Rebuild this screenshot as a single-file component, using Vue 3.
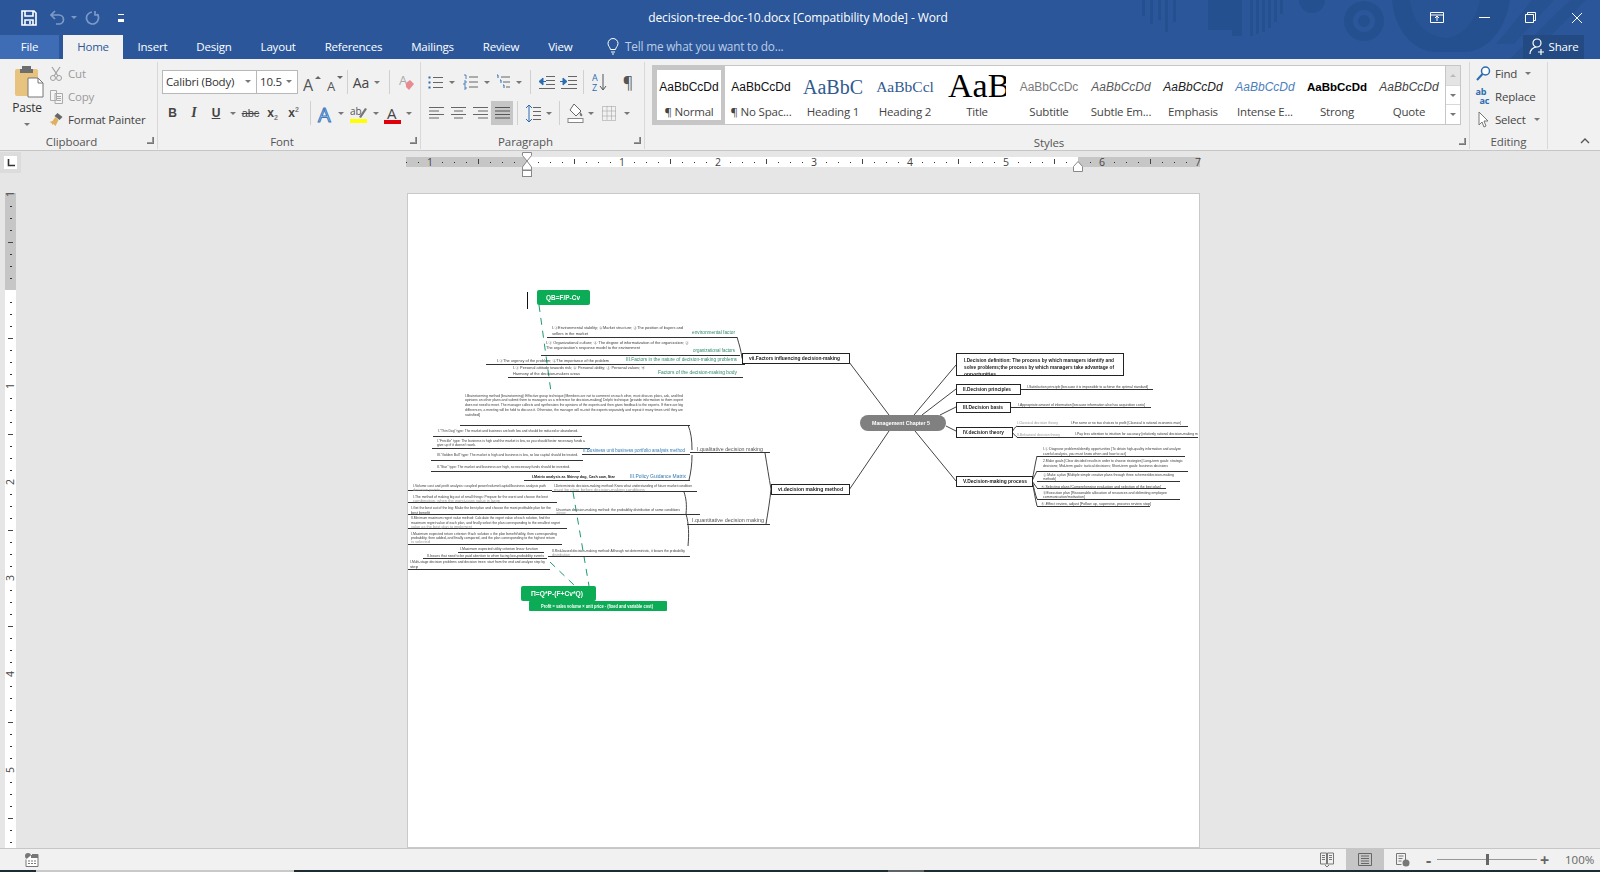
<template>
  <div class="word">
    <div class="chrome">
      <svg class="decor" width="480" height="59" viewBox="1120 0 480 59">
        <g fill="#25508f">
          <rect v-for="b in decorBars" :key="b[0]" :x="b[0]" y="0" :width="b[1]" :height="b[2]" />
          <circle cx="1312" cy="0" r="13" />
          <circle cx="1364" cy="21" r="20" />
          <path d="M1392 0h118c-4 28-22 52-46 52h-28c-24 0-42-24-44-52z" />
          <path d="M1532 0h22l-40 44h-18zM1570 0h16l-58 59h-18z" opacity="0.7" />
        </g>
        <circle cx="1364" cy="21" r="11" fill="#2b579a" />
        <circle cx="1364" cy="21" r="6" fill="#25508f" />
        <path d="M1410 0c2 20 14 36 36 38 18-2 30-18 34-38z" fill="#2b579a" opacity="0.55" />
      </svg>
      <header class="titlebar">
        <div class="qat">
          <svg width="16" height="16" viewBox="0 0 16 16"><path d="M1 1h12l2 2v12H1z M4 1v5h8V1 M4 15v-5h8v5 M9 11v3" fill="none" stroke="#fff" stroke-width="1.6" /></svg>
          <svg class="undo" width="15" height="15" viewBox="0 0 15 15"><path d="M5 1L1 5l4 4M1 5h8a4 4 0 0 1 0 9H6" fill="none" stroke="#7d9ac6" stroke-width="1.7" /></svg>
          <i class="qat-dd"></i>
          <svg class="redo" width="15" height="15" viewBox="0 0 15 15"><path d="M10 1v4h4M12 4a6 6 0 1 1-5-2" fill="none" stroke="#7d9ac6" stroke-width="1.7" /></svg>
          <span class="qat-more"></span>
        </div>
        <div class="doc-title">decision-tree-doc-10.docx [Compatibility Mode] - Word</div>
        <div class="win-ctl">
          <svg width="14" height="12" viewBox="0 0 14 12"><path d="M.5.5h13v10H.5zM.5 3h13M7 9V4.500M5 6l2-2 2 2" fill="none" stroke="#fff" /></svg>
          <svg width="11" height="11" viewBox="0 0 11 11"><path d="M0 5.500h11" stroke="#fff" /></svg>
          <svg width="11" height="11" viewBox="0 0 11 11"><path d="M.5 2.500h8v8h-8zM2.500 2.500v-2h8v8h-2" fill="none" stroke="#fff" /></svg>
          <svg width="12" height="12" viewBox="0 0 12 12"><path d="M1 1l10 10M11 1L1 11" stroke="#fff" /></svg>
        </div>
      </header>

      <nav class="tabs">
        <span class="tab file">File</span>
        <span class="tab home">Home</span>
        <span v-for="t in tabs" :key="t" class="tab">{{ t }}</span>
        <span class="tell">
          <svg width="12" height="17" viewBox="0 0 12 17"><path d="M3.500 11.500C3 9 1 8 1 5.500a5 5 0 0 1 10 0C11 8 9 9 8.500 11.500zM4 14h4M5 16h2" fill="none" stroke="#fff" /></svg>
          Tell me what you want to do...
        </span>
        <span class="share">
          <svg width="16" height="17" viewBox="0 0 16 17"><path d="M8 1a4 4 0 0 1 0 8 4 4 0 0 1 0-8zM1 16c0-4 3-7 7-7M9 14h6M12 11v6" fill="none" stroke="#fff" stroke-width="1.200" /></svg>
          Share
        </span>
      </nav>
    </div>

    <section class="ribbon">
      <div class="group clipboard">
        <div class="group-body clip-body">
          <div class="paste">
            <svg width="29" height="33" viewBox="0 0 29 33">
              <rect x="0" y="4" width="23" height="27" rx="2" fill="#e8c27f" />
              <path d="M7 4h9V1h-9z M5 4h13v4H5z" fill="#6d6d6d" />
              <path d="M13 13h10l5 5v14H13z" fill="#fff" stroke="#777" />
              <path d="M23 13v5h5" fill="none" stroke="#777" />
            </svg>
            <span>Paste</span>
            <i class="dd"></i>
          </div>
          <div class="clip-list">
            <div class="clip-row off">
              <svg width="15" height="15" viewBox="0 0 15 15"><path d="M3 1l6 9M11 1L5 10" stroke="#a0a0a0" stroke-width="1.200" fill="none" /><circle cx="4" cy="12" r="2.500" fill="none" stroke="#a0a0a0" /><circle cx="10" cy="12" r="2.500" fill="none" stroke="#a0a0a0" /></svg>
              Cut
            </div>
            <div class="clip-row off">
              <svg width="15" height="15" viewBox="0 0 15 15"><path d="M1.500 1.500h6v10h-6zM6 4.500h7.500v10H6zM8 7.500h4M8 9.500h4M8 11.500h4" fill="#f4f4f4" stroke="#aaa" /></svg>
              Copy
            </div>
            <div class="clip-row">
              <svg width="16" height="15" viewBox="0 0 16 15"><path d="M9 1l5 4-3 3-5-4z" fill="#666" /><path d="M7 5l3 3-3 6-2-2-1 1-1-2-2-1 3-1z" fill="#e0b060" /></svg>
              Format Painter
            </div>
          </div>
        </div>
        <div class="group-label">Clipboard<i class="launcher"></i></div>
      </div>

      <div class="group font">
        <div class="group-body rows">
          <div class="row font-1">
            <div class="combos">
              <span class="combo family">Calibri (Body)<i class="dd"></i></span>
              <span class="combo size">10.5<i class="dd"></i></span>
            </div>
            <svg width="18" height="24" viewBox="0 -6 18 24"><text x="0" y="15" class="ico-a">A</text><path d="M12 3l3-3 3 3z" fill="#666" /></svg>
            <svg width="16" height="24" viewBox="0 -6 16 24"><text x="0" y="15" class="ico-a small">A</text><path d="M10 0l3 3 3-3z" fill="#666" /></svg>
            <b class="sep"></b>
            <span class="aa">Aa</span><i class="dd"></i>
            <b class="sep"></b>
            <svg width="15" height="22" viewBox="0 -3 15 22"><text x="0" y="11" class="ico-erase">A</text><path d="M7 9l4-3 4 4-5 6-3-3z" fill="#e78a92" /></svg>
          </div>
          <div class="row font-2">
            <b class="fmt">B</b>
            <em class="fmt">I</em>
            <u class="fmt ub">U</u>
            <i class="dd"></i>
            <s class="fmt abc">abc</s>
            <span class="fmt">x<sub>2</sub></span>
            <span class="fmt">x<sup>2</sup></span>
            <b class="sep"></b>
            <svg width="19" height="24" viewBox="0 -4 19 24"><text x="1" y="17" class="ico-effect">A</text></svg>
            <i class="dd"></i>
            <svg width="17" height="22" viewBox="0 -2 17 22"><text x="0" y="11" class="ico-hl">ab</text><path d="M9 13l6-9 2 1-6 9z" fill="#777" /><rect y="15" width="17" height="4" fill="#ffff00" /></svg>
            <i class="dd"></i>
            <svg width="17" height="24" viewBox="0 -4 17 24"><text x="3" y="14" class="ico-color">A</text><rect y="15" width="17" height="4" fill="#e0000b" /></svg>
            <i class="dd"></i>
          </div>
        </div>
        <div class="group-label">Font<i class="launcher"></i></div>
      </div>

      <div class="group para">
        <div class="group-body rows">
          <div class="row para-1">
            <svg width="15" height="15" viewBox="0 0 15 15"><path d="M5 2.500h10M5 7.500h10M5 12.500h10" stroke="#666" /><path d="M.5 2.500h2M.5 7.500h2M.5 12.500h2" stroke="#2b6cb0" stroke-width="2" /></svg>
            <i class="dd"></i>
            <svg width="15" height="16" viewBox="0 0 15 16"><path d="M6 3h9M6 8h9M6 13h9" stroke="#666" /><path d="M1 1h2v4M1 7h2v2H1v2h2M1 13h2v2H1" stroke="#2b6cb0" fill="none" stroke-width="0.800" /></svg>
            <i class="dd"></i>
            <svg width="15" height="16" viewBox="0 0 15 16"><path d="M5 3h9M7 8h7M10 13h4" stroke="#666" /><path d="M1 1h1v3M4 6h1v3M7 11h1v3" stroke="#2b6cb0" fill="none" /></svg>
            <i class="dd"></i>
            <b class="sep"></b>
            <svg width="17" height="13" viewBox="0 0 17 13"><path d="M8 .5h9M8 4.500h9M8 8.500h9M1 12.500h16" stroke="#666" /><path d="M5 2L1 5.500 5 9zM3 5.500h5" fill="#2b6cb0" stroke="#2b6cb0" /></svg>
            <svg width="17" height="13" viewBox="0 0 17 13"><path d="M8 .5h9M8 4.500h9M8 8.500h9M1 12.500h16" stroke="#666" /><path d="M3 2l4 3.500L3 9zM0 5.500h4" fill="#2b6cb0" stroke="#2b6cb0" /></svg>
            <b class="sep"></b>
            <svg width="15" height="22" viewBox="0 -2 15 22"><text x="0" y="8" class="ico-sort">A</text><text x="0" y="18" class="ico-sort">Z</text><path d="M11 1v15M8 13l3 4 3-4" fill="none" stroke="#555" /></svg>
            <span class="pilcrow">¶</span>
          </div>
          <div class="row para-2">
            <svg width="15" height="12" viewBox="0 0 15 12"><path d="M0 .5h15M0 4h10M0 7.500h15M0 11h10" stroke="#666" /></svg>
            <svg width="15" height="12" viewBox="0 0 15 12"><path d="M0 .5h15M3 4h9M0 7.500h15M3 11h9" stroke="#666" /></svg>
            <svg width="15" height="12" viewBox="0 0 15 12"><path d="M0 .5h15M5 4h10M0 7.500h15M5 11h10" stroke="#666" /></svg>
            <span class="just"><svg width="15" height="12" viewBox="0 0 15 12"><path d="M0 .5h15M0 4h15M0 7.500h15M0 11h15" stroke="#555" /></svg></span>
            <b class="sep"></b>
            <svg width="15" height="19" viewBox="0 0 15 19"><path d="M7 3.500h8M7 7.500h8M7 11.500h8M7 15.500h8" stroke="#666" /><path d="M3 1v17M0 4l3-3 3 3M0 15l3 3 3-3" fill="none" stroke="#2b6cb0" /></svg>
            <i class="dd"></i>
            <b class="sep"></b>
            <svg width="17" height="20" viewBox="0 0 17 20"><path d="M7 1l7 7-5 5-6-6z" fill="#fff" stroke="#666" /><path d="M13 9c2 2 3 3 2 4s-3 0-2-4z" fill="#777" /><rect x="1" y="15.500" width="15" height="4" fill="#fff" stroke="#888" /></svg>
            <i class="dd"></i>
            <svg width="14" height="15" viewBox="0 0 14 15"><path d="M.5.500h13v14H.5zM5 .500v14M9.500.500v14M.5 5h13M.5 10h13" fill="none" stroke="#999" stroke-dasharray="1 1" /></svg>
            <i class="dd"></i>
          </div>
        </div>
        <div class="group-label">Paragraph<i class="launcher"></i></div>
      </div>

      <div class="group styles">
        <div class="gallery">
          <div v-for="(s, i) in styleItems" :key="s.label" class="style-item" :class="{ current: i === 0 }">
            <span class="sample" :class="s.cls">{{ s.sample }}</span>
            <span class="style-name">{{ s.label }}</span>
          </div>
          <div class="scroller">
            <span class="scroll-cell up"><i class="tri up-tri"></i></span>
            <span class="scroll-cell"><i class="dd"></i></span>
            <span class="scroll-cell more"><i class="dd"></i></span>
          </div>
        </div>
        <div class="group-label styles-label">Styles<i class="launcher"></i></div>
      </div>

      <div class="group editing">
        <div class="group-body edit-list">
          <div class="clip-row">
            <svg width="15" height="15" viewBox="0 0 15 15"><circle cx="9.500" cy="5" r="4" fill="#fff" stroke="#2b6cb0" stroke-width="1.500" /><path d="M6.500 8L1 14" stroke="#2b6cb0" stroke-width="2" /></svg>
            Find <i class="dd edit-dd"></i>
          </div>
          <div class="clip-row">
            <svg width="16" height="19" viewBox="0 0 16 19"><text x="0" y="8" class="ico-rep">ab</text><text x="4" y="17" class="ico-rep">ac</text></svg>
            Replace
          </div>
          <div class="clip-row">
            <svg width="15" height="17" viewBox="0 0 15 17"><path d="M3 1v13l3-3 2 5 2-1-2-5h4z" fill="#fff" stroke="#777" /></svg>
            Select <i class="dd edit-dd"></i>
          </div>
        </div>
        <div class="group-label">Editing</div>
      </div>

      <div class="collapse">
        <svg width="10" height="6" viewBox="0 0 10 6"><path d="M1 5l4-4 4 4" fill="none" stroke="#555" stroke-width="1.300" /></svg>
      </div>
    </section>

    <div class="ruler-row">
      <span class="tab-stop"><svg width="8" height="8" viewBox="0 0 8 8"><path d="M1.500 0v6.500H8" fill="none" stroke="#333" stroke-width="1.600" /></svg></span>
      <svg class="h-ruler" width="800" height="27" viewBox="402 151 800 27">
        <rect x="406" y="157" width="794" height="10" fill="#fff" />
        <rect x="406" y="157" width="121" height="10" fill="#c6c6c6" />
        <rect x="1078" y="157" width="122" height="10" fill="#c6c6c6" />
        <template v-for="t in hTicks" :key="t.x">
          <text v-if="t.n" :x="t.x" y="165.500" class="rule-num">{{ t.n }}</text>
          <path v-else-if="t.half" :d="`M${t.x + 0.5} 159v5`" stroke="#444" />
          <rect v-else :x="t.x" y="162" width="1" height="1" fill="#333" />
        </template>
        <path d="M522.500 152.500h9v3l-4.500 5.500-4.500-5.500zM527 161l4.500 6v3h-9v-3z" fill="#fff" stroke="#888" />
        <rect x="522.500" y="170.500" width="9" height="6" fill="#fff" stroke="#888" />
        <path d="M1078 161.500l4.500 5v5h-9v-5z" fill="#fff" stroke="#888" />
      </svg>
    </div>

    <main class="workspace">
      <svg class="v-ruler" width="11" height="655" viewBox="0 193 11 655">
        <rect x="0" y="193" width="11" height="97" fill="#c6c6c6" />
        <rect x="0" y="290" width="11" height="558" fill="#fff" />
        <template v-for="t in vTicks" :key="t.y">
          <text v-if="t.n" :transform="`rotate(-90 6 ${t.y})`" x="3" :y="t.y + 3" class="rule-num">{{ t.n }}</text>
          <rect v-else-if="t.half" x="3" :y="t.y" width="5" height="1" fill="#444" />
          <rect x="5" :y="t.y" width="2" height="1" fill="#333" v-else />
        </template>
      </svg>
      <article class="page">
        <svg class="mindmap" width="791" height="655" viewBox="408 193 791 655">
          <defs>
            <clipPath id="defbox"><rect x="956" y="353" width="167" height="22" /></clipPath>
          </defs>
          <path v-for="(d, i) in dashes" :key="'d' + i" :d="d" fill="none" stroke="#1a9b6c" stroke-width="1" stroke-dasharray="7 6" />
          <path v-for="(c, i) in curves" :key="'c' + i" :d="c" fill="none" stroke="#444" stroke-width="1" />
          <path v-for="(l, i) in rules" :key="'l' + i" :d="`M${l[0]} ${l[1] + 0.5}H${l[2]}`" stroke="#333" stroke-width="1" />

          <rect x="527" y="292" width="1" height="17" fill="#111" />
          <rect x="537" y="290" width="53" height="15" rx="2" fill="#0cab55" />
          <text x="546" y="298" textLength="34" lengthAdjust="spacingAndGlyphs" class="green-t big">QB=F/P-Cv</text>
          <rect x="521" y="586" width="75" height="15" rx="2" fill="#0cab55" />
          <text x="531" y="594" textLength="52" lengthAdjust="spacingAndGlyphs" class="green-t big">Π=Q*P-(F+Cv*Q)</text>
          <rect x="529" y="601" width="138" height="10" rx="1" fill="#0cab55" />
          <text x="541" y="606" textLength="112" lengthAdjust="spacingAndGlyphs" class="green-t">Profit = sales volume × unit price - (fixed and variable cost)</text>

          <rect x="860" y="415" width="86" height="16" rx="8" fill="#808080" />
          <text x="872" y="423" textLength="58" lengthAdjust="spacingAndGlyphs" class="green-t">Management Chapter 5</text>

          <g v-for="b in boxes" :key="b.t[0] + b.t[2]">
            <rect :x="b.x + 0.5" :y="b.y + 0.5" :width="b.w" :height="b.h" fill="#fff" stroke="#222" />
            <text v-if="b.t[2]" :x="b.t[0]" :y="b.y + 5.500" :textLength="b.t[1]" lengthAdjust="spacingAndGlyphs" class="box-t">{{ b.t[2] }}</text>
          </g>
          <text x="964" y="360" textLength="150" lengthAdjust="spacingAndGlyphs" class="box-t">I.Decision definition: The process by which managers identify and</text>
          <text x="964" y="367" textLength="150" lengthAdjust="spacingAndGlyphs" class="box-t">solve problems;the process by which managers take advantage of</text>
          <text x="964" y="374" textLength="32" lengthAdjust="spacingAndGlyphs" class="box-t" clip-path="url(#defbox)">opportunities</text>

          <text v-for="(t, i) in labels" :key="'g' + i" :x="t[0]" :y="t[1]" :textLength="t[2] - t[0]" lengthAdjust="spacingAndGlyphs" class="map-label" :class="t[4]">{{ t[3] }}</text>
          <text v-for="(t, i) in notes" :key="'n' + i" :x="t[0]" :y="t[1]" :textLength="t[2] - t[0]" lengthAdjust="spacingAndGlyphs" class="note" :class="t[4]">{{ t[3] }}</text>
        </svg>
      </article>
    </main>

    <footer class="statusbar">
      <svg class="macro" width="14" height="14" viewBox="0 0 14 14"><circle cx="3" cy="3" r="3" fill="#777" /><path d="M1 6.500v7h12V1.500H7" fill="#fff" stroke="#777" /><path d="M6 2h7v3H6z" fill="#777" /><path d="M3 8h2M6 8h2M9 8h2M3 10.500h2M6 10.500h2M9 10.500h2" stroke="#777" /></svg>
      <svg class="read" width="14" height="15" viewBox="0 0 14 15"><path d="M.5 1h6v11h-6zM7.500 1h6v11h-6zM2 3.500h3M2 5.500h3M2 7.500h3M9 3.500h3M9 5.500h3M9 7.500h3M5 13l2 2 2-2" fill="none" stroke="#777" /></svg>
      <span class="view-active"><svg width="14" height="13" viewBox="0 0 14 13"><path d="M.5.500h13v12H.5zM3 3h8M3 5.500h8M3 8h8M3 10.500h8" fill="none" stroke="#666" /></svg></span>
      <svg class="web" width="14" height="14" viewBox="0 0 14 14"><path d="M.5.500h9v8M.5.500v11h5M2.500 3h5M2.500 5.500h4M2.500 8h3" fill="none" stroke="#777" /><circle cx="10" cy="10" r="3.500" fill="#777" /></svg>
      <span class="zoom-minus">-</span>
      <span class="slider"><i class="thumb"></i></span>
      <span class="zoom-plus">+</span>
      <span class="zoom-val">100%</span>
    </footer>
    <div class="taskbar-edge">
      <i class="edge dark w36"></i><i class="edge light w258"></i><i class="edge dark w594"></i><i class="edge mid w36"></i><i class="edge dark rest"></i>
    </div>
  </div>
</template>

<script setup>
const tabs = ['Insert', 'Design', 'Layout', 'References', 'Mailings', 'Review', 'View']

const decorBars = [
  [1142, 3, 16], [1150, 3, 24], [1158, 3, 20], [1165, 3, 32], [1173, 3, 22],
  [1208, 32, 30], [1232, 10, 36], [1250, 3, 36], [1256, 3, 34], [1262, 3, 32], [1268, 3, 28], [1274, 3, 22], [1280, 3, 14]
]

const styleItems = [
  { sample: 'AaBbCcDd', label: '¶ Normal', cls: '' },
  { sample: 'AaBbCcDd', label: '¶ No Spac...', cls: '' },
  { sample: 'AaBbC', label: 'Heading 1', cls: 'h1' },
  { sample: 'AaBbCcl', label: 'Heading 2', cls: 'h2' },
  { sample: 'AaB', label: 'Title', cls: 'title' },
  { sample: 'AaBbCcDc', label: 'Subtitle', cls: 'sub' },
  { sample: 'AaBbCcDd', label: 'Subtle Em...', cls: 'subem' },
  { sample: 'AaBbCcDd', label: 'Emphasis', cls: 'em' },
  { sample: 'AaBbCcDd', label: 'Intense E...', cls: 'intense' },
  { sample: 'AaBbCcDd', label: 'Strong', cls: 'strong' },
  { sample: 'AaBbCcDd', label: 'Quote', cls: 'quote' }
]

// ruler marks: a number every inch (96px), a bar every half inch, dots between
const hTicks = []
for (let k = -10; k <= 56; k++) {
  const x = 526 + k * 12
  if (k === 0) continue
  if (k % 8 === 0) hTicks.push({ x: x - 3, n: Math.abs(k / 8) })
  else if (k % 4 === 0) hTicks.push({ x, half: true })
  else hTicks.push({ x })
}
const vTicks = []
for (let k = -8; k <= 46; k++) {
  const y = 290 + k * 12
  if (k === 0) continue
  if (k % 8 === 0) vTicks.push({ y, n: Math.abs(k / 8) })
  else if (k % 4 === 0) vTicks.push({ y, half: true })
  else vTicks.push({ y })
}

const dashes = [
  'M539 305L551 392',
  'M573 492L589 586',
  'M550 562L574 585'
]

const curves = [
  'M889 415L849 362', 'M889 431L849 490',
  'M914 415L956 365', 'M922 415L956 389', 'M940 415L956 407',
  'M946 426L956 431', 'M915 431L956 481',
  'M737 337C739 344 741 350 742 358',
  'M745 364L742 358',
  'M688 425C691 432 692 440 692 450',
  'M692 455C692 464 691 472 689 480',
  'M765 453C767 465 769 478 771 489',
  'M771 489C770 500 768 512 766 524',
  'M684 492C686 498 687 504 686 514',
  'M686 514C689 524 689 535 688 546',
  'M1012 432C1014 429 1015 427 1017 426', 'M1012 432C1014 434 1015 436 1017 437',
  'M1032 481C1034 472 1035 464 1037 456', 'M1032 481C1034 478 1035 474 1037 471',
  'M1032 481L1037 488', 'M1032 481C1034 488 1035 494 1037 499', 'M1032 481C1034 490 1035 498 1037 506'
]

const rules = [
  [547, 337, 737], [541, 355, 740], [486, 364, 745], [508, 377, 743],
  [460, 425, 690], [433, 436, 582], [432, 448, 590], [431, 460, 583], [431, 471, 580],
  [524, 480, 690], [582, 454, 690], [690, 452, 770],
  [408, 490, 552], [552, 491, 697], [408, 502, 557], [408, 514, 700], [408, 528, 567],
  [408, 544, 562], [458, 552, 544], [423, 558, 547], [408, 569, 550], [548, 556, 690],
  [687, 524, 770],
  [1020, 389, 1153], [1010, 407, 1151], [1017, 426, 1188], [1017, 437, 1198],
  [1037, 456, 1185], [1037, 471, 1188], [1037, 481, 1180], [1037, 488, 1166], [1037, 499, 1180], [1037, 506, 1150]
]

const boxes = [
  { x: 742, y: 353, w: 107, h: 10, t: [749, 91, 'vii.Factors influencing decision-making'] },
  { x: 771, y: 484, w: 78, h: 10, t: [778, 65, 'vi.decision making method'] },
  { x: 956, y: 353, w: 167, h: 22, t: [964, 75, ''] },
  { x: 956, y: 384, w: 64, h: 10, t: [963, 48, 'II.Decision principles'] },
  { x: 956, y: 402, w: 54, h: 10, t: [963, 40, 'III.Decision basis'] },
  { x: 956, y: 427, w: 56, h: 10, t: [963, 41, 'IV.decision theory'] },
  { x: 956, y: 476, w: 76, h: 10, t: [963, 64, 'V.Decision-making process'] }
]

const labels = [
  [692, 333, 735, 'environmental factor', 'teal'],
  [693, 351, 735, 'organizational factors', 'teal'],
  [626, 360, 737, 'III.Factors in the nature of decision-making problems', 'teal'],
  [658, 373, 737, 'Factors of the decision-making body', 'teal'],
  [583, 451, 685, 'II.Business unit business portfolio analysis method', 'blue'],
  [630, 477, 686, 'III.Policy Guidance Matrix', 'blue'],
  [697, 450, 763, 'I.qualitative decision making', 'gray'],
  [692, 521, 764, 'I.quantitative decision making', 'gray']
]

const notes = [
  [552, 328, 683, 'I.①Environmental stability; ②Market structure; ③The position of buyers and'],
  [552, 334, 588, 'sellers in the market'],
  [546, 343, 689, 'I.① Organizational culture; ② The degree of informatization of the organization; ③'],
  [546, 348, 640, "The organization's response model to the environment"],
  [497, 361, 609, 'I.①The urgency of the problem; ②The importance of the problem'],
  [513, 368, 645, 'I.① Personal attitude towards risk; ② Personal ability; ③ Personal values; ④'],
  [513, 374, 580, 'Harmony of the decision-makers areas'],
  [465, 396, 683, 'I.Brainstorming method [brainstorming]: Effective group technique [Members are not to comment on each other, must discuss plans, ask, and find'],
  [465, 400, 683, 'opinions on other plans and submit them to managers as a reference for decision-making] Delphi technique [provide information to them expert'],
  [465, 405, 683, 'does not need to meet. The manager collects and synthesizes the opinions of the experts and then gives feedback to the experts. If there are big'],
  [465, 410, 683, 'differences, a meeting will be held to discuss it. Otherwise, the manager will re-visit the experts separately and repeat it many times until they are'],
  [465, 415, 480, 'satisfied]'],
  [438, 431, 578, 'I."Thin Dog" type: The market and business are both low and should be reduced or abandoned.'],
  [437, 441, 585, 'I."Freckle" type: The business is high and the market is low, so you should foster necessary funds a'],
  [437, 445, 476, "give up if it doesn't work."],
  [437, 455, 578, 'III."Golden Bull" type: The market is high and business is low, so low capital should be treated.'],
  [437, 467, 570, 'II."Star" type: The market and business are high, so necessary funds should be invested.'],
  [532, 477, 615, 'I.Matrix analysis as Skinny dog, Cash cow, Star', 'dark'],
  [413, 486, 546, 'I.Volume cost and profit analysis: coupled power/volume/capital/business analysis path'],
  [413, 490, 440, 'decision points', 'faint'],
  [554, 486, 692, 'I.Deterministic decision-making method: Know what understanding of future market condition'],
  [554, 490, 645, 'must be clear before decision-making conditions', 'faint'],
  [413, 497, 548, 'I.The method of making big out of small things: Prepare for the worst and choose the best'],
  [413, 501, 500, 'combination, when the worst-case value is large', 'faint'],
  [411, 508, 551, 'I.Get the best out of the big: Make the best plan and choose the most profitable plan for the'],
  [411, 513, 430, 'best benefit'],
  [556, 510, 680, 'Uncertain decision-making method: the probability distribution of some conditions'],
  [556, 513, 566, 'unknown', 'faint'],
  [411, 518, 550, 'II.Minimum maximum regret value method: Calculate the regret value of each solution, find the'],
  [411, 523, 560, 'maximum regret value of each plan, and finally select the plan corresponding to the smallest regret'],
  [411, 527, 472, 'value as the best plan to implement', 'faint'],
  [411, 534, 557, 'I.Maximum expected return criterion: Each solution x the plan benefit/utility, then corresponding'],
  [411, 538, 555, 'probability, then added, and finally compared, and the plan corresponding to the highest return'],
  [411, 542, 430, 'is selected', 'faint'],
  [460, 549, 538, 'I.Maximum expected utility criterion linear function'],
  [427, 556, 544, 'II.Issues that need to be paid attention to when facing low-probability events'],
  [410, 562, 545, 'I.Multi-stage decision problems and decision trees: start from the end and analyze step by'],
  [410, 567, 418, 'step'],
  [552, 551, 685, 'II.Risk-based decision-making method: Although not deterministic, it knows the probability'],
  [552, 555, 570, 'distribution', 'faint'],
  [1027, 386.500, 1148, 'I.Satisfaction principle [because it is impossible to achieve the optimal standard]'],
  [1018, 405, 1145, 'I.Appropriate amount of information [because information also has acquisition costs]'],
  [1017, 423, 1058, 'I.Classical decision theory', 'faint'],
  [1071, 423, 1181, 'I.For some or no two choices to profit [Classical is rational economic man]'],
  [1017, 435, 1060, 'II.Behavioral decision theory', 'faint'],
  [1075, 434, 1198, 'I.Pay less attention to intuition for accuracy [relatively rational decision-making m'],
  [1043, 449, 1181, 'I.① Diagnose problems/identify opportunities [To obtain high-quality information and analyze'],
  [1043, 453.500, 1126, 'careful analysis, you must know when and how to act]'],
  [1043, 461, 1183, '2.Make goals [Clear decided results in order to choose strategies] Long-term goals: strategic'],
  [1043, 466, 1168, 'decisions; Mid-term goals: tactical decisions; Short-term goals: business decisions'],
  [1043, 475, 1174, '③.Make a plan [Multiple simple creative plans through three schemes/decision-making'],
  [1043, 479, 1056, 'methods]'],
  [1041, 487, 1161, '④.Selecting plans [Comprehensive evaluation and selection of the best plan]'],
  [1043, 493, 1167, '⑤Execution plan [Reasonable allocation of resources and delimiting employee'],
  [1043, 497, 1085, 'communication/motivation]'],
  [1041, 504, 1151, '⑥.Effect review, adjust [Follow up, supervise, process review stop]']
]
</script>

<style>
html, body {
  margin: 0;
  overflow: hidden;
  background: #e6e6e6;
}
</style>

<style scoped>
.word {
  width: 1600px;
  height: 872px;
  display: flex;
  flex-direction: column;
  font-family: "Open Sans", "Liberation Sans", sans-serif;
  color: #444;
  overflow: hidden;
}
i, b.sep { display: block; }

.chrome {
  position: relative;
  flex: none;
  background: #2b579a;
  overflow: hidden;
}
.decor { position: absolute; left: 1120px; top: 0; }
.titlebar {
  position: relative;
  height: 35px;
  display: grid;
  grid-template-columns: 1fr auto 1fr;
  align-items: center;
  color: #fff;
}
.qat {
  display: flex;
  align-items: center;
  padding-left: 21px;
}
.undo { margin-left: 13px; }
.redo { margin-left: 8px; }
.qat-dd {
  width: 0;
  height: 0;
  border: 3px solid transparent;
  border-top: 3px solid #7d9ac6;
  margin: 3px 0 0 6px;
}
.qat-more {
  width: 6px;
  height: 4px;
  margin-left: 18px;
  border-top: 1px solid #fff;
  border-bottom: 3px solid #fff;
}
.doc-title {
  font-size: 12px;
  padding-right: 4px;
  letter-spacing: -0.100px;
}
.win-ctl {
  display: flex;
  align-items: center;
  justify-content: flex-end;
  gap: 35px;
  padding-right: 17px;
}

.tabs {
  position: relative;
  height: 24px;
  display: flex;
  align-items: stretch;
  color: #fff;
  font-size: 11.500px;
}
.tab {
  display: flex;
  align-items: center;
  padding: 0 14.500px 2px;
  letter-spacing: -0.200px;
}
.tab.file {
  width: 59px;
  box-sizing: border-box;
  justify-content: center;
  background: #3e6db5;
  margin-right: 4px;
}
.tab.home {
  width: 60px;
  box-sizing: border-box;
  justify-content: center;
  background: #f1f1f1;
  color: #2b579a;
}
.tell {
  display: flex;
  align-items: center;
  padding-bottom: 2px;
  margin-left: 20px;
  color: #bccde6;
  font-size: 11.800px;
  letter-spacing: -0.200px;
}
.tell svg { margin-right: 6px; }
.share {
  margin-left: auto;
  margin-right: 16px;
  width: 61px;
  box-sizing: border-box;
  display: flex;
  align-items: center;
  justify-content: center;
  gap: 4px;
  padding-bottom: 1px;
  background: #234a83;
  letter-spacing: -0.200px;
}

.ribbon {
  height: 92px;
  flex: none;
  box-sizing: border-box;
  background: #f1f1f1;
  border-bottom: 1px solid #c6c6c6;
  display: flex;
  font-size: 11.500px;
}
.group {
  position: relative;
  box-sizing: border-box;
  height: 87px;
  margin-top: 3px;
  display: flex;
  flex-direction: column;
  border-right: 1px solid #d8d8d8;
}
.group-body { height: 73px; }
.group-label {
  position: relative;
  height: 15px;
  line-height: 16px;
  text-align: center;
  padding-right: 14px;
  font-size: 11.500px;
  color: #555;
  letter-spacing: -0.100px;
}
.launcher {
  position: absolute;
  right: 3px;
  top: 3px;
  width: 6px;
  height: 6px;
  border-right: 1px solid #777;
  border-bottom: 1px solid #777;
  box-shadow: inset -2px -2px 0 -1px #999;
}
.dd {
  width: 0;
  height: 0;
  border: 3px solid transparent;
  border-top: 3px solid #777;
  border-bottom-width: 0;
}
.clipboard { width: 158px; }
.clip-body { display: flex; padding-left: 7px; }
.paste {
  width: 40px;
  display: flex;
  flex-direction: column;
  align-items: center;
  font-size: 12px;
  color: #333;
  padding-top: 3px;
}
.paste svg { margin-left: 4px; margin-bottom: 1px; }
.paste span { line-height: 17px; letter-spacing: -0.200px; }
.paste .dd { margin-top: 7px; }
.clip-list { margin-left: 1px; }
.clip-row {
  height: 23px;
  display: flex;
  align-items: center;
  gap: 3px;
  color: #444;
  letter-spacing: -0.200px;
}
.clip-row svg { width: 17px; flex: none; }
.clip-row.off { color: #9b9b9b; }
.rows {
  padding-top: 8px;
  padding-left: 4px;
  display: flex;
  flex-direction: column;
  gap: 7px;
  box-sizing: border-box;
}
.row {
  display: grid;
  height: 24px;
  align-items: center;
  justify-items: center;
}
.font { width: 263px; }
.font-1 { grid-template-columns: 136px 28px 18px 6px 22px 10px 14px 21px; }
.font-2 { grid-template-columns: 21px 22px 22px 12px 23px 21px 21px 12px 20px 10px 24px 11px 23px 10px; }
.combos { display: flex; justify-self: start; }
.combo {
  box-sizing: border-box;
  height: 24px;
  background: #fff;
  border: 1px solid #b8b8b8;
  display: flex;
  align-items: center;
  justify-content: space-between;
  padding: 0 5px 1px 3px;
  letter-spacing: -0.200px;
  color: #333;
}
.combo.family { width: 95px; }
.combo.size { width: 42px; margin-left: -1px; }
.sep { width: 1px; height: 24px; background: #d0d0d0; }
.aa { font-size: 14px; color: #444; }
.fmt { font-size: 12px; color: #444; font-style: normal; font-family: "Liberation Sans", sans-serif; font-weight: 700; }
em.fmt { font-style: italic; font-family: "Liberation Serif", serif; font-size: 14px; }
.abc { font-size: 11px; font-weight: 400; }
.fmt sub, .fmt sup { font-size: 7px; line-height: 0; color: #777; }
.ico-a { font-size: 16px; fill: #555; font-family: "Open Sans", sans-serif; }
.ico-a.small { font-size: 13px; }
.ico-erase { font-size: 13px; fill: #aaa; font-family: "Open Sans", sans-serif; }
.ico-effect { font-size: 20px; fill: #cfe2f6; stroke: #3a78c0; stroke-width: 1; font-family: "Open Sans", sans-serif; }
.ico-hl { font-size: 10px; fill: #555; font-family: "Open Sans", sans-serif; }
.ico-color { font-size: 15px; fill: #444; font-family: "Open Sans", sans-serif; }
.ico-sort { font-size: 9px; fill: #2b6cb0; font-family: "Open Sans", sans-serif; }
.ico-rep { font-size: 9px; fill: #2b6cb0; font-weight: 700; font-family: "Open Sans", sans-serif; }
.rule-num { font-size: 10.500px; fill: #444; font-family: "Open Sans", sans-serif; }

.para { width: 224px; }
.para-1 { grid-template-columns: 21px 11px 26px 8px 24px 8px 14px 18px 26px 4px 28px 30px; }
.para-2 { grid-template-columns: 22px 22px 22px 22px 9px 22px 9px 12px 20px 11px 26px 10px; }
.pilcrow { font-size: 16px; color: #555; }
.just {
  width: 22px;
  height: 24px;
  background: #c6c6c6;
  display: flex;
  align-items: center;
  justify-content: center;
}

.styles { width: 825px; }
.gallery {
  box-sizing: border-box;
  margin: 3px 0 0 7px;
  width: 809px;
  height: 60px;
  background: #fff;
  border: 1px solid #c6c6c6;
  display: flex;
}
.style-item {
  box-sizing: border-box;
  width: 72px;
  height: 58px;
  padding: 4px;
  display: flex;
  flex-direction: column;
  align-items: center;
  overflow: hidden;
  flex: none;
}
.style-item.current { border: 4px solid #c6c6c6; padding: 0; }
.sample {
  height: 32px;
  width: 62px;
  overflow: hidden;
  white-space: nowrap;
  text-align: center;
  line-height: 34px;
  font-size: 12px;
  color: #111;
  font-family: "Liberation Sans", sans-serif;
}
.sample.h1 { font: 20px/34px "Liberation Serif", serif; color: #2f5a8f; }
.sample.h2 { font: 15.500px/34px "Liberation Serif", serif; color: #2f5a8f; }
.sample.title { font: 34px/32px "Liberation Serif", serif; color: #000; width: 58px; text-align: left; }
.sample.sub { color: #7a7a7a; }
.sample.subem { font-style: italic; color: #5a5a5a; }
.sample.em { font-style: italic; color: #222; }
.sample.intense { font-style: italic; color: #4e7fbd; }
.sample.strong { font-weight: 700; color: #000; font-size: 11.500px; }
.sample.quote { font-style: italic; color: #444; }
.style-name {
  font-size: 11.500px;
  line-height: 17px;
  margin-top: 2px;
  white-space: nowrap;
  letter-spacing: -0.200px;
  color: #444;
}
.scroller {
  width: 15px;
  border-left: 1px solid #c6c6c6;
  display: flex;
  flex-direction: column;
}
.scroll-cell {
  flex: 1;
  display: flex;
  align-items: center;
  justify-content: center;
  border-bottom: 1px solid #d8d8d8;
}
.scroll-cell.up { background: #e4e4e4; }
.tri.up-tri {
  width: 0;
  height: 0;
  border: 3px solid transparent;
  border-bottom: 3px solid #bbb;
  border-top-width: 0;
}
.more { border-bottom: 0; }
.styles-label { margin-top: 10px; padding-right: 16px; }
.editing { width: 78px; }
.editing .group-label { padding-right: 0; }
.edit-list { padding-left: 5px; }
.edit-dd { margin-left: 5px; }
.collapse { flex: 1; display: flex; align-items: flex-end; justify-content: flex-end; padding: 0 10px 6px 0; }

.ruler-row {
  height: 27px;
  background: #e6e6e6;
  display: flex;
  flex: none;
}
.tab-stop {
  box-sizing: border-box;
  width: 21px;
  height: 21px;
  margin-top: 1px;
  border: 4px solid #dcdcdc;
  background: #fff;
  display: flex;
  align-items: center;
  justify-content: center;
}
.h-ruler { margin-left: 381px; }
.workspace {
  flex: 1;
  min-height: 0;
  background: #e6e6e6;
  display: flex;
  align-items: flex-start;
  padding: 15px 0 0 5px;
  overflow: hidden;
}
.page {
  margin-left: 391px;
  width: 793px;
  height: 655px;
  background: #fff;
  box-shadow: inset 0 0 0 1px #c9c9c9;
  overflow: hidden;
}
.mindmap { display: block; margin-left: 1px; filter: blur(0.3px); }
.green-t {
  font-family: "Liberation Sans", sans-serif;
  font-size: 6px;
  font-weight: 700;
  fill: #fff;
  dominant-baseline: middle;
}
.green-t.big { font-size: 8px; }
.box-t {
  font-family: "Liberation Sans", sans-serif;
  font-size: 5.800px;
  font-weight: 700;
  fill: #222;
  dominant-baseline: middle;
}
.map-label {
  font-family: "Liberation Sans", sans-serif;
  font-size: 5.500px;
  dominant-baseline: middle;
}
.map-label.teal { fill: #2f8a68; }
.map-label.blue { fill: #2f77b0; }
.map-label.gray { fill: #555; }
.note {
  font-family: "Liberation Sans", "Noto Sans CJK SC", sans-serif;
  font-size: 3.800px;
  fill: #3c3c3c;
  dominant-baseline: middle;
}
.note.faint { fill: #999; }
.note.dark { fill: #111; font-weight: 700; }

.statusbar {
  box-sizing: border-box;
  height: 22px;
  flex: none;
  background: #f1f1f1;
  border-top: 1px solid #c6c6c6;
  display: flex;
  align-items: center;
  color: #666;
}
.macro { margin-left: 25px; }
.read { margin-left: auto; }
.view-active {
  width: 38px;
  height: 21px;
  margin-left: 12px;
  background: #c6c6c6;
  display: flex;
  align-items: center;
  justify-content: center;
}
.web { margin-left: 12px; }
.zoom-minus { margin-left: 16px; width: 8px; font-size: 16px; font-weight: 700; }
.slider {
  position: relative;
  width: 100px;
  height: 1px;
  background: #999;
  margin-left: 3px;
}
.thumb {
  position: absolute;
  left: 49px;
  top: -5px;
  width: 3px;
  height: 11px;
  background: #666;
}
.zoom-plus { margin-left: 3px; width: 14px; font-size: 16px; font-weight: 700; }
.zoom-val { margin-left: 11px; width: 35px; font-size: 11.500px; }
.taskbar-edge { height: 2px; display: flex; flex: none; }
.edge.dark { background: #1d2b33; }
.edge.light { background: #c9c9c9; }
.edge.mid { background: #5c6469; }
.w36 { width: 36px; }
.w258 { width: 258px; }
.w594 { width: 594px; }
.rest { flex: 1; }
</style>
